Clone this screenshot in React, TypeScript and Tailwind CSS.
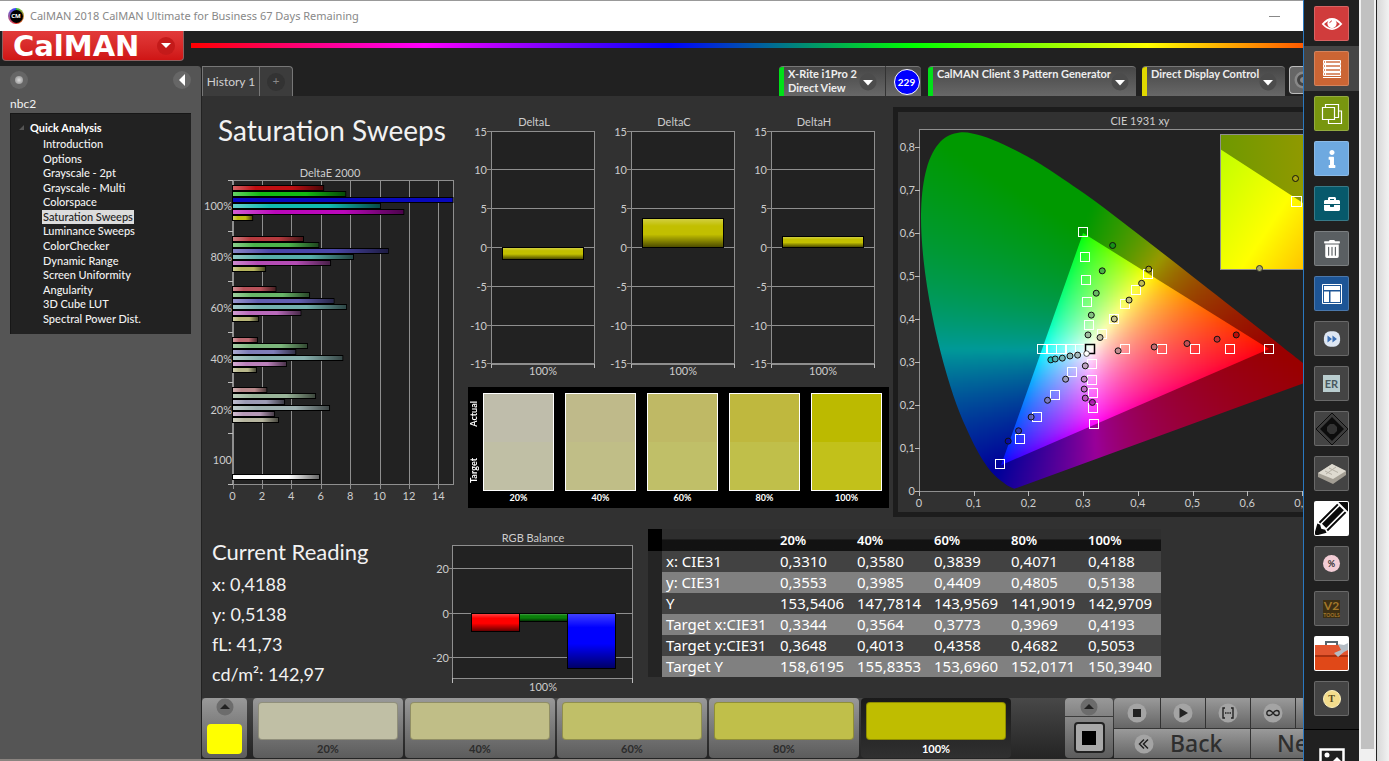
import React, { useState } from 'react';
import clsx from 'clsx';
import { FaInfo, FaBriefcase, FaTrashAlt } from 'react-icons/fa';

const PAGES = [
  'Introduction', 'Options', 'Grayscale - 2pt', 'Grayscale - Multi', 'Colorspace', 'Saturation Sweeps',
  'Luminance Sweeps', 'ColorChecker', 'Dynamic Range', 'Screen Uniformity', 'Angularity', '3D Cube LUT',
  'Spectral Power Dist.',
];

const SWATCHES = [
  { label: '20%', actual: '#bfbdab', target: '#c0bfa5' },
  { label: '40%', actual: '#bfba8a', target: '#c0be87' },
  { label: '60%', actual: '#bfb965', target: '#c0bf68' },
  { label: '80%', actual: '#bfb83e', target: '#c0bf4a' },
  { label: '100%', actual: '#bcba00', target: '#c2c11a' },
];

const STEP_FILLS = ['#c0bfa5', '#c0be87', '#c0bf68', '#c0bf4a', '#bfbd00'];

const DELTA_E = [
  { label: '100%', values: [6.2, 7.7, 15, 10.07, 11.65, 1.37], colors: ['#c00f12', '#12b812', '#0808bd', '#12b8b0', '#bb08bb', '#bdbb10'] },
  { label: '80%', values: [4.83, 5.87, 10.6, 8.23, 6.67, 2.25], colors: ['#b53a3e', '#4cb34c', '#4a46a8', '#57aeaa', '#b44cb4', '#b5b35c'] },
  { label: '60%', values: [2.95, 5.24, 6.9, 7.75, 4.65, 1.77], colors: ['#b8525a', '#68b568', '#625fb0', '#72b0ae', '#b96abb', '#b8b678'] },
  { label: '40%', values: [1.7, 5.1, 4.3, 7.5, 3.67, 1.63], colors: ['#bd6a72', '#7cb67c', '#7f7db8', '#88b1af', '#bb80bb', '#b9b88c'] },
  { label: '20%', values: [2.33, 5.65, 3.54, 6.6, 2.86, 3.13], colors: ['#b98a8c', '#98b398', '#9c9bb5', '#9db0b0', '#b79ab7', '#b7b6a0'] },
];

const HEADERS = ['20%', '40%', '60%', '80%', '100%'];
const ROWS = [
  ['x: CIE31', '0,3310', '0,3580', '0,3839', '0,4071', '0,4188'],
  ['y: CIE31', '0,3553', '0,3985', '0,4409', '0,4805', '0,5138'],
  ['Y', '153,5406', '147,7814', '143,9569', '141,9019', '142,9709'],
  ['Target x:CIE31', '0,3344', '0,3564', '0,3773', '0,3969', '0,4193'],
  ['Target y:CIE31', '0,3648', '0,4013', '0,4358', '0,4682', '0,5053'],
  ['Target Y', '158,6195', '155,8353', '153,6960', '152,0171', '150,3940'],
];

/* ---------- CIE helpers ---------- */

const LOCUS: [number, number][] = [
  [0.1741, 0.005], [0.1644, 0.0109], [0.1566, 0.0177], [0.144, 0.0297], [0.1355, 0.0399],
  [0.1241, 0.0578], [0.1096, 0.0868], [0.0913, 0.1327], [0.0687, 0.2007], [0.0454, 0.295], [0.0235, 0.4127],
  [0.0082, 0.5384], [0.0039, 0.6548], [0.0139, 0.7502], [0.0389, 0.812], [0.0743, 0.8338], [0.1142, 0.8262],
  [0.1547, 0.8059], [0.1929, 0.7816], [0.2296, 0.7543], [0.3016, 0.6923], [0.3731, 0.6245], [0.4441, 0.5547],
  [0.5125, 0.4866], [0.5752, 0.4242], [0.627, 0.3725], [0.6658, 0.334], [0.6915, 0.3083], [0.719, 0.2809],
  [0.7347, 0.2653],
];

const TARGETS: [number, number][] = [
  [0.3, 0.602], [0.303, 0.544], [0.305, 0.491], [0.307, 0.44], [0.31, 0.385],
  [0.419, 0.505], [0.396, 0.468], [0.377, 0.436], [0.356, 0.401], [0.334, 0.365],
  [0.64, 0.331], [0.568, 0.331], [0.504, 0.331], [0.444, 0.331], [0.377, 0.331],
  [0.225, 0.33], [0.243, 0.33], [0.26, 0.33], [0.277, 0.33], [0.295, 0.33],
  [0.316, 0.295], [0.317, 0.257], [0.318, 0.227], [0.318, 0.193], [0.32, 0.156],
  [0.28, 0.277], [0.248, 0.223], [0.216, 0.172], [0.184, 0.121], [0.148, 0.063],
];

const READINGS: [number, number, string][] = [
  [0.354, 0.571, '#12901a'], [0.335, 0.512, '#3fa545'], [0.324, 0.46, '#62ad62'], [0.315, 0.409, '#7cb47c'], [0.309, 0.363, '#98b398'],
  [0.42, 0.516, '#a8a410'], [0.407, 0.483, '#b5b35c'], [0.384, 0.444, '#b8b678'], [0.357, 0.4, '#b9b88c'], [0.331, 0.357, '#b7b6a0'],
  [0.58, 0.363, '#b00808'], [0.545, 0.353, '#b83038'], [0.49, 0.343, '#b85058'], [0.43, 0.335, '#bd6a72'], [0.364, 0.326, '#b98a8c'],
  [0.241, 0.305, '#12b8b0'], [0.249, 0.307, '#57aeaa'], [0.262, 0.309, '#72b0ae'], [0.276, 0.314, '#88b1af'], [0.29, 0.316, '#9db0b0'],
  [0.304, 0.291, '#b79ab7'], [0.302, 0.26, '#bb80bb'], [0.302, 0.237, '#b96abb'], [0.304, 0.216, '#b44cb4'], [0.317, 0.206, '#a010a0'],
  [0.268, 0.26, '#9c9bb5'], [0.235, 0.211, '#7f7db8'], [0.205, 0.172, '#625fb0'], [0.182, 0.14, '#3a38a8'], [0.163, 0.116, '#0808a0'],
];

const PX = 547;
const PY = 430;
const X0 = 21;
const Y0 = 379;
const cx = (x: number) => X0 + x * PX;
const cy = (y: number) => Y0 - y * PY;

// Catmull-Rom through the spectral locus, closed by the straight purple line
function locusPath() {
  const p = LOCUS.map(([x, y]) => [cx(x), cy(y)]);
  let d = `M${p[0][0]} ${p[0][1]}`;
  for (let i = 0; i < p.length - 1; i++) {
    const a = p[i - 1] ?? p[i];
    const b = p[i];
    const c = p[i + 1];
    const e = p[i + 2] ?? c;
    d += `C${b[0] + (c[0] - a[0]) / 6} ${b[1] + (c[1] - a[1]) / 6} ${c[0] - (e[0] - b[0]) / 6} ${c[1] - (e[1] - b[1]) / 6} ${c[0]} ${c[1]}`;
  }
  return d + 'Z';
}

// xy chromaticity -> brightest displayable sRGB colour, scaled by k
function xyToRgb(x: number, y: number, k: number, gamma: number) {
  const yy = Math.max(y, 0.001);
  const X = x / yy;
  const Z = (1 - x - yy) / yy;
  const lin = [
    3.2406 * X - 1.5372 - 0.4986 * Z,
    -0.9689 * X + 1.8758 + 0.0415 * Z,
    0.0557 * X - 0.204 + 1.057 * Z,
  ].map((v) => Math.max(v, 0));
  const max = Math.max(...lin, 0.0001);
  const [r, g, b] = lin.map((v) => Math.round(255 * k * Math.pow(v / max, 1 / gamma)));
  return `rgb(${r},${g},${b})`;
}

const CELL = 5;
function cells(k: number, gamma: number, x1: number, y1: number, x2: number, y2: number) {
  const out = [];
  for (let px = x1; px < x2; px += CELL) {
    for (let py = y1; py < y2; py += CELL) {
      const fill = xyToRgb((px + CELL / 2 - X0) / PX, (Y0 - py - CELL / 2) / PY, k, gamma);
      out.push(<rect key={`${px}-${py}`} x={px} y={py} width={CELL + 1} height={CELL + 1} fill={fill} />);
    }
  }
  return out;
}

/* ---------- Charts ---------- */

const label = 'fill-[#cdcdcd] text-[11px]';

function DeltaEChart() {
  const x = (v: number) => 30.5 + v * 14.7;
  return (
    <svg viewBox="0 0 262 345" className="w-[262px] h-[345px] block">
      <defs>
        <linearGradient id="barShade">
          <stop offset="0" stopColor="#fff" stopOpacity="0.35" />
          <stop offset="0.25" stopColor="#fff" stopOpacity="0" />
          <stop offset="0.65" stopColor="#000" stopOpacity="0" />
          <stop offset="1" stopColor="#000" stopOpacity="0.6" />
        </linearGradient>
      </defs>
      <text x="128" y="12" textAnchor="middle" className={label}>DeltaE 2000</text>
      <rect x="30.5" y="15.5" width="221" height="304" fill="#222" stroke="#8f8f8f" />
      {[0, 2, 4, 6, 8, 10, 12, 14].map((v) => (
        <g key={v}>
          <path d={`M${Math.round(x(v)) + 0.5} 15V324`} stroke="#8f8f8f" />
          <text x={x(v)} y="335" textAnchor="middle" className={label}>{v}</text>
        </g>
      ))}
      {[0, 1, 2, 3, 4, 5, 6].map((i) => (
        <path key={i} d={`M26 ${Math.round(15 + i * 50.6) + 0.5}h5`} stroke="#bbb" />
      ))}
      {DELTA_E.map((g, i) => (
        <g key={g.label}>
          <text x="30" y={45 + i * 51} textAnchor="end" className={label}>{g.label}</text>
          {g.values.map((v, j) => {
            const y = Math.round(20 + i * 50.6 + j * 6) + 0.5;
            return (
              <g key={j}>
                <rect x="30.5" y={y} width={v * 14.7} height="5" fill={g.colors[j]} stroke="#000" />
                {v < 15 && <rect x="31" y={y + 0.5} width={v * 14.7 - 1} height="4" fill="url(#barShade)" />}
              </g>
            );
          })}
        </g>
      ))}
      <text x="30" y="299" textAnchor="end" className={label}>100</text>
      <rect x="30.5" y="309.5" width="87" height="5" fill="#fff" stroke="#000" />
      <rect x="31" y="310" width="86" height="4" fill="url(#barShade)" />
    </svg>
  );
}

function DeltaChart({ title, value }: { title: string; value: number }) {
  const y = (v: number) => Math.round(135 - v * 7.76) + 0.5;
  const top = value > 0 ? y(value) : y(0);
  const height = Math.abs(y(value) - y(0));
  return (
    <svg viewBox="0 0 140 275" className="w-[140px] h-[275px] block">
      <text x="68" y="14" textAnchor="middle" className={label}>{title}</text>
      <rect x="25.5" y="19.5" width="103" height="233" fill="#222" stroke="#8f8f8f" />
      {[15, 10, 5, 0, -5, -10, -15].map((v) => (
        <g key={v}>
          <path d={`M21 ${y(v)}H128`} stroke="#8f8f8f" />
          <text x="21" y={y(v) + 4} textAnchor="end" className={label}>{v}</text>
        </g>
      ))}
      <path d="M25.5 252v4M128.5 252v4" stroke="#bbb" />
      <rect x="36.5" y={top} width="81" height={height} fill="#c2bf00" stroke="#000" />
      <rect x="37" y={top + 0.5} width="80" height={height - 1} fill="url(#columnShade)" />
      <text x="77" y="263" textAnchor="middle" className={label}>100%</text>
    </svg>
  );
}

function RgbBalance() {
  const bars = [
    { x: 46.5, h: 18, fill: '#ff0000' },
    { x: 94.5, h: 8, fill: '#0a800a' },
    { x: 142.5, h: 55, fill: '#0000ff' },
  ];
  return (
    <svg viewBox="0 0 223 168" className="w-[223px] h-[168px] block">
      <defs>
        <linearGradient id="columnShade" x1="0" y1="0" x2="0" y2="1">
          <stop offset="0" stopColor="#fff" stopOpacity="0.25" />
          <stop offset="0.25" stopColor="#fff" stopOpacity="0" />
          <stop offset="0.55" stopColor="#000" stopOpacity="0" />
          <stop offset="1" stopColor="#000" stopOpacity="0.6" />
        </linearGradient>
      </defs>
      <text x="108" y="13" textAnchor="middle" className={label}>RGB Balance</text>
      <rect x="27.5" y="16.5" width="180" height="133" fill="#222" stroke="#8f8f8f" />
      {[[20, 39.5], [0, 84.5], [-20, 128.5]].map(([v, y]) => (
        <g key={v}>
          <path d={`M24 ${y}H207`} stroke="#8f8f8f" />
          <text x="24" y={y + 4} textAnchor="end" className={label}>{v}</text>
        </g>
      ))}
      <path d="M27.5 149v5M207.5 149v5" stroke="#bbb" />
      {bars.map((b) => (
        <g key={b.x}>
          <rect x={b.x} y="84.5" width="48" height={b.h} fill={b.fill} stroke="#000" />
          <rect x={b.x + 0.5} y="85" width="47" height={b.h - 1} fill="url(#columnShade)" />
        </g>
      ))}
      <text x="118" y="162" textAnchor="middle" className={label}>100%</text>
    </svg>
  );
}

function CieChart() {
  const gamut = `M${cx(0.3)} ${cy(0.6)}L${cx(0.64)} ${cy(0.33)}L${cx(0.15)} ${cy(0.06)}Z`;
  return (
    <svg viewBox="0 0 440 400" className="w-[440px] h-[400px] block">
      <defs>
        <clipPath id="locus"><path d={locusPath()} /></clipPath>
        <clipPath id="gamut"><path d={gamut} /></clipPath>
        <filter id="smooth" colorInterpolationFilters="sRGB"><feGaussianBlur stdDeviation="2" /></filter>
        <linearGradient id="insetFill" x1="0" y1="0" x2="1" y2="0.6">
          <stop offset="0" stopColor="#bfff00" />
          <stop offset="0.55" stopColor="#ffff00" />
          <stop offset="1" stopColor="#ffb000" />
        </linearGradient>
        <linearGradient id="insetDark">
          <stop offset="0" stopColor="#6f9900" />
          <stop offset="0.6" stopColor="#8f9900" />
          <stop offset="1" stopColor="#998000" />
        </linearGradient>
      </defs>
      <text x="242" y="13" textAnchor="middle" className={label}>CIE 1931 xy</text>
      <rect x="21.5" y="17.5" width="430" height="362" fill="#222" stroke="#8f8f8f" />
      {[0, 1, 2, 3, 4, 5, 6, 7, 8].map((i) => (
        <g key={i}>
          <path d={`M17 ${Math.round(cy(i / 10)) + 0.5}h5`} stroke="#bbb" />
          <text x="17" y={cy(i / 10) + 4} textAnchor="end" className={label}>{i ? `0,${i}` : '0'}</text>
        </g>
      ))}
      {[0, 1, 2, 3, 4, 5, 6, 7].map((i) => (
        <g key={i}>
          <path d={`M${Math.round(cx(i / 10)) + 0.5} 379v5`} stroke="#bbb" />
          <text x={cx(i / 10)} y="395" textAnchor="middle" className={label}>{i ? `0,${i}` : '0'}</text>
        </g>
      ))}
      <g clipPath="url(#locus)"><g filter="url(#smooth)">{cells(0.6, 1.1, 10, 10, 440, 390)}</g></g>
      <g clipPath="url(#gamut)"><g filter="url(#smooth)">{cells(1, 1.4, 90, 110, 390, 365)}</g></g>

      {TARGETS.map(([x, y]) => (
        <rect key={`${x}-${y}`} x={Math.round(cx(x) - 5) + 0.5} y={Math.round(cy(y) - 5) + 0.5} width="9" height="9" fill="none" stroke="#fff" />
      ))}
      <rect x="187.5" y="232.5" width="9" height="9" fill="none" stroke="#000" strokeWidth="1.5" />
      {READINGS.map(([x, y, fill]) => (
        <circle key={`${x}-${y}`} cx={cx(x)} cy={cy(y)} r="3" fill={fill} fillOpacity="0.85" stroke="#111" />
      ))}
      <circle cx="188.6" cy="241.6" r="2.8" fill="#fff" stroke="#111" strokeWidth="0.7" />

      {/* zoomed view of the selected point */}
      <rect x="322.5" y="22.5" width="135" height="135" fill="url(#insetDark)" />
      <path d="M322 37L405 91L458 125V158H322Z" fill="url(#insetFill)" />
      <rect x="322.5" y="22.5" width="135" height="135" fill="none" stroke="#8f8f8f" />
      <circle cx="397.5" cy="66.5" r="3" fill="#a8a410" stroke="#111" />
      <circle cx="361.5" cy="156.5" r="3" fill="#a8a868" stroke="#333" />
      <rect x="393.5" y="84.5" width="10" height="10" fill="none" stroke="#fff" />
    </svg>
  );
}

/* ---------- Chrome ---------- */

function Arrow({ up }: { up?: boolean }) {
  return (
    <svg viewBox="0 0 18 18" className="w-[18px] h-[18px] shrink-0">
      <circle cx="9" cy="9" r="8.5" fill={up ? '#6c6c6c' : '#4c4c4c'} />
      {up ? <path d="M4 11L9 6L14 11Z" fill="#222" /> : <path d="M4 7H14L9 12.5Z" fill="#fff" />}
    </svg>
  );
}

function DeviceTab({ color, children, className }: { color: string; children: React.ReactNode; className: string }) {
  return (
    <button className={clsx('flex h-[30px] rounded-t border-t border-[#777] bg-linear-to-b from-[#474747] to-[#686868] text-left text-[11px] leading-[14px] font-bold text-[#eee] overflow-hidden', className)}>
      <span className={clsx('w-[5px] h-full shrink-0 mr-1', color)} />
      <span className="flex-1 whitespace-nowrap">{children}</span>
      <span className="pt-1.5 pr-2"><Arrow /></span>
    </button>
  );
}

function Sidebar() {
  const [page, setPage] = useState('Saturation Sweeps');
  return (
    <aside className="w-[202px] shrink-0 rounded-tr bg-[#555] border-r border-[#222] px-2.5 pt-1">
      <div className="flex items-center justify-between h-5">
        <button aria-label="Record" className="w-[18px] h-[18px] rounded-full bg-[#666] flex items-center justify-center">
          <span className="w-[8px] h-[8px] rounded-full bg-radial from-[#ddd] to-[#888]" />
        </button>
        <button aria-label="Collapse" className="w-[18px] h-[18px] rounded-full bg-[#666] flex items-center justify-center">
          <svg viewBox="0 0 6 12" className="w-[6px] h-3"><path d="M6 0V12L0 6Z" fill="#fff" /></svg>
        </button>
      </div>
      <div className="mt-1.5 h-[17px] leading-[16px] text-[12px] text-[#f2f2f2]">nbc2</div>
      <nav className="h-[221px] bg-[#222] border-t border-l border-[#171717] pt-[7px] text-[11px] leading-[14px]">
        <div className="flex items-center font-bold text-white">
          <svg viewBox="0 0 6 6" className="w-[6px] h-[6px] ml-2 mr-[5px]"><path d="M5 0V5H0Z" fill="#555" /></svg>
          Quick Analysis
        </div>
        <ul className="mt-0.5 h-[189px] pl-[31px] flex flex-col justify-between items-start text-[#f2f2f2] font-medium">
          {PAGES.map((p) => (
            <li key={p} className="h-[14px]">
              <button onClick={() => setPage(p)} className={clsx('block h-[14px] px-px whitespace-nowrap', p === page && 'bg-[#dcdcdc] text-[#222]')}>{p}</button>
            </li>
          ))}
        </ul>
      </nav>
    </aside>
  );
}

function SwatchPanel() {
  return (
    <div className="ml-0.5 w-[421px] h-[121px] bg-black flex pt-1.5 text-white text-[9px] font-bold">
      <div className="w-[15px] pr-1 h-[98px] flex flex-col-reverse justify-between py-2 items-center">
        <span className="[writing-mode:vertical-rl] rotate-180 leading-[10px]">Target</span>
        <span className="[writing-mode:vertical-rl] rotate-180 leading-[10px]">Actual</span>
      </div>
      <div className="flex gap-[11px]">
        {SWATCHES.map((s) => (
          <div key={s.label} className="w-[71px] text-center leading-[13px]">
            <div className="h-[98px] border border-white flex flex-col">
              <div className="flex-1" style={{ background: s.actual }} />
              <div className="flex-1" style={{ background: s.target }} />
            </div>
            {s.label}
          </div>
        ))}
      </div>
    </div>
  );
}

function ReadingsTable() {
  return (
    <table className="w-[513px] h-[148px] table-fixed border-collapse text-left text-[15px] leading-[18px] text-white font-['Noto_Sans',sans-serif]">
      <thead>
        <tr className="h-[22px] bg-linear-to-b from-[#2e2e2e] from-45% to-[#121212] to-50% text-[13px]">
          <td className="w-[14px] bg-black" />
          <td className="w-[114px]" />
          {HEADERS.map((h) => <th key={h} scope="col" className="p-0 pl-1 font-semibold">{h}</th>)}
        </tr>
      </thead>
      <tbody>
        {ROWS.map(([name, ...vals]) => (
          <tr key={name} className="h-[21px] bg-[#424242] even:bg-[#808080]">
            <td className="p-0 bg-[#242424]" />
            <th scope="row" className="p-0 pl-1 pb-0.5 font-normal whitespace-nowrap">{name}</th>
            {vals.map((v) => <td key={v} className="p-0 pl-1 pb-0.5">{v}</td>)}
          </tr>
        ))}
      </tbody>
    </table>
  );
}

function MediaIcon({ children }: { children: React.ReactNode }) {
  return (
    <svg viewBox="0 0 20 20" className="w-5 h-5">
      <circle cx="10" cy="10" r="9.5" fill="#a4a4a4" />
      {children}
    </svg>
  );
}

function Footer() {
  const [step, setStep] = useState('100%');
  const key = 'flex items-center bg-linear-to-b from-[#9a9a9a] to-[#666] border-r border-[#333]';
  return (
    <footer className="h-[61px] shrink-0 flex bg-linear-to-b from-[#484848] to-[#242424]">
      <button aria-label="Current colour" className="w-[45px] h-[60px] shrink-0 rounded bg-linear-to-b from-[#999] to-[#5c5c5c] flex flex-col items-center">
        <Arrow up />
        <span className="mt-2 w-[35px] h-[30px] rounded-sm bg-[#ffff00]" />
      </button>
      <div className="ml-1.5 flex gap-0.5">
        {HEADERS.map((h, i) => (
          <button key={h} onClick={() => setStep(h)}
            className={clsx('w-[150px] h-[60px] rounded px-[5px] pt-1 text-[11px] leading-[18px] font-bold',
              h === step ? 'bg-linear-to-b from-[#1a1a1a] to-[#303030] text-white' : 'bg-linear-to-b from-[#999] to-[#5c5c5c] text-[#2c2c2c]')}>
            <span className="block h-[38px] rounded-sm border border-black/25" style={{ background: STEP_FILLS[i] }} />
            {h}
          </button>
        ))}
      </div>
      <div className="ml-auto w-[238px] shrink-0 flex h-[60px]">
        <div className="w-[48px] mr-px shrink-0 flex flex-col">
          <button aria-label="Expand" className="h-[18px] rounded-t bg-linear-to-b from-[#999] to-[#828282] flex justify-center"><Arrow up /></button>
          <button aria-label="Pattern" className="flex-1 mt-px rounded-b bg-linear-to-b from-[#888] to-[#5c5c5c] flex items-center justify-center">
            <span className="w-[31px] h-[31px] rounded border-2 border-[#222] bg-[#a8a8a8] flex items-center justify-center">
              <span className="w-[14px] h-[14px] bg-black" />
            </span>
          </button>
        </div>
        <div className="w-[220px] shrink-0 flex flex-col">
          <div className="flex h-[30px] rounded-tl overflow-hidden">
            <button aria-label="Stop" className={clsx(key, 'justify-center w-[47px]')}><MediaIcon><path d="M6 6h8v8h-8z" fill="#222" /></MediaIcon></button>
            <button aria-label="Play" className={clsx(key, 'justify-center w-[45px]')}><MediaIcon><path d="M6.5 5L15 10L6.5 15Z" fill="#222" /></MediaIcon></button>
            <button aria-label="Range" className={clsx(key, 'justify-center w-[45px]')}>
              <MediaIcon><path d="M7 5H5V15H7M13 5H15V15H13M7 10H8.5M9.3 10H10.7M11.5 10H13" stroke="#222" strokeWidth="1.4" fill="none" /></MediaIcon>
            </button>
            <button aria-label="Continuous" className={clsx(key, 'justify-center w-[45px]')}>
              <MediaIcon><path d="M10 10C8.5 8 7.5 7.5 6.3 7.5a2.5 2.5 0 0 0 0 5C7.5 12.5 8.5 12 10 10C11.5 8 12.5 7.5 13.7 7.5a2.5 2.5 0 0 1 0 5C12.5 12.5 11.5 12 10 10Z" stroke="#222" strokeWidth="1.3" fill="none" /></MediaIcon>
            </button>
            <button aria-label="More" className={clsx(key, 'flex-1')} />
          </div>
          <div className="flex flex-1 mt-px text-[23px] leading-none font-medium text-[#2e2e2e] font-['Noto_Sans',sans-serif]">
            <button className={clsx(key, 'w-[137px] gap-4 pl-5')}>
              <MediaIcon><path d="M10 5.5L5.5 10L10 14.5M14 5.5L9.5 10L14 14.5" stroke="#222" strokeWidth="1.5" fill="none" /></MediaIcon>
              Back
            </button>
            <button className={clsx(key, 'flex-1 pl-[26px]')}>Next</button>
          </div>
        </div>
      </div>
    </footer>
  );
}

/* ---------- Dock on the right edge ---------- */

const DOCK = [
  { name: 'View', bg: 'bg-[#d03c3c]', icon: <svg viewBox="0 0 24 24" className="w-[22px] h-[22px] shrink-0"><path d="M2 12Q12 1 22 12Q12 23 2 12Z" fill="none" stroke="#fff" strokeWidth="2" /><circle cx="12" cy="11.5" r="5" fill="#fff" /><path d="M9.5 11A3 3 0 0 1 12 8.5" stroke="#d03c3c" fill="none" /></svg> },
  { name: 'List', bg: 'bg-[#cb6534]', active: true, icon: <svg viewBox="0 0 20 20" className="w-5 h-5 shrink-0"><path d="M1.5 1.5H18.5V4.5H1.5ZM1.5 5.5H18.5V8.5H1.5ZM1.5 9.5H18.5V12.5H1.5ZM1.5 13.5H18.5V16.5H1.5Z" stroke="#fff" fill="#fff" fillOpacity="0.3" /><path d="M3.5 1.5V16.5M1 18.5H19" stroke="#fff" /></svg> },
  { name: 'Copy', bg: 'bg-[#78960f]', icon: <svg viewBox="0 0 22 22" className="w-[22px] h-[22px] shrink-0" fill="none" stroke="#fff" strokeWidth="1.2"><path d="M1.5 4.5H13.5V16.5H1.5ZM4.5 4V1.5H17.5V14.5H14M7.5 17V20.5H20.5V8H18" /></svg> },
  { name: 'Info', bg: 'bg-[#6ea9e0]', icon: <FaInfo className="text-white text-lg" /> },
  { name: 'Tools', bg: 'bg-[#07596b]', icon: <FaBriefcase className="text-white text-base" /> },
  { name: 'Delete', bg: 'bg-[#5a5f62]', icon: <FaTrashAlt className="text-white text-lg" /> },
  { name: 'Layout', bg: 'bg-[#1d5596]', icon: <svg viewBox="0 0 20 20" className="w-5 h-5 shrink-0"><path d="M0.5 0.5H19.5V19.5H0.5Z" fill="none" stroke="#fff" /><path d="M2 2H18V6H2ZM2 7.5H7V18H2ZM8.5 7.5H18V18H8.5Z" fill="#fff" /></svg> },
  { name: 'Forward', bg: 'bg-[#444]', icon: <svg viewBox="0 0 20 20" className="w-[18px] h-[18px] shrink-0"><rect x="1" y="1.5" width="18" height="17" rx="7" fill="#dde6f3" /><path d="M5 6L10 10L5 14ZM10.5 6L15.5 10L10.5 14Z" fill="#3c6fb4" /></svg> },
  { name: 'ER', bg: 'bg-[#444]', icon: <span className="w-[17px] h-[17px] bg-[#b9cdcf] text-[#4a5a60] text-[11px] leading-[17px] font-bold text-center">ER</span> },
  { name: 'Diamond', bg: 'bg-[#444]', icon: <svg viewBox="0 0 34 34" className="w-[34px] h-[34px] shrink-0"><path d="M17 1L33 17L17 33L1 17Z" fill="#3c3c3c" stroke="#0c0c0c" /><path d="M17 5L29 17L17 29L5 17Z" fill="#0c0c0c" /><path d="M15 12H19L22 15V19L19 22H15L12 19V15Z" fill="#333" /></svg> },
  { name: 'Scanner', bg: 'bg-[#444]', icon: <svg viewBox="0 0 30 24" className="w-[30px] h-6 shrink-0"><path d="M1 11L15 2L29 9V13L16 22L1 15Z" fill="#a39e94" /><path d="M1 11L15 2L29 9L16 17Z" fill="#dedad0" /><path d="M8 9L15 12.5M12 6L21 10.5M19 5L9 12" stroke="#b5b0a5" /></svg> },
  { name: 'Edit', bg: 'bg-white', icon: (
    <svg viewBox="0 0 35 35" className="w-[35px] h-[35px] shrink-0">
      <g transform="rotate(45 17.5 17.5)" fill="#0a0a0a">
        <path d="M11 1V-3Q11 -6 14 -6H21Q24 -6 24 -3V1Z" />
        <path d="M11 3H13V29H11ZM14.5 3H20.5V28H14.5ZM22 3H24V29H22Z" />
        <path d="M11 31L14 30L17.5 32L21 30L24 31L19.5 39L17.5 42L15.5 39Z" />
      </g>
    </svg>
  ) },
  { name: 'Percent', bg: 'bg-[#444]', icon: <span className="w-[17px] h-[17px] rounded-full bg-[#f3cdd6] text-[#333] text-[9px] leading-[17px] font-bold text-center">%</span> },
  { name: 'V2 Tools', bg: 'bg-[#444]', icon: <span className="w-[17px] h-[18px] bg-[#3d2f14] text-[#a3782a] text-center font-bold"><span className="block text-[12px] leading-[12px]">V2</span><span className="block text-[5px] leading-[6px]">TOOLS</span></span> },
  { name: 'Toolbox', bg: 'bg-white', icon: <svg viewBox="0 0 35 35" className="w-[35px] h-[35px] shrink-0"><path d="M12 10V6H23V10" fill="none" stroke="#56656e" strokeWidth="2" /><path d="M0 9H35V20H0Z" fill="#e2552f" /><path d="M0 20H35V34H0Z" fill="#e04818" /><path d="M0 19H35V21H0Z" fill="#a83010" /><path d="M20 17L27 14L24 8L30 9L34 7V14L30 16L24 21Z" fill="#b4bcc4" /></svg> },
  { name: 'Text', bg: 'bg-[#444]', icon: <span className="w-[18px] h-[18px] rounded-full bg-[#f3dc8c] border border-[#fff2c0] text-[#5a4a20] text-[10px] leading-[16px] font-bold text-center font-['Liberation_Serif',serif]">T</span> },
];

function Dock() {
  return (
    <div className="w-[56px] shrink-0 bg-[#202020] border-l border-[#2a78c0] pt-px overflow-hidden">
      {DOCK.map((d) => (
        <div key={d.name} className={clsx('h-[45px] flex items-center pl-2.5', d.active && 'bg-[#454545]')}>
          <button aria-label={d.name} className={clsx('w-[35px] h-[35px] rounded-xs border border-white/20 flex items-center justify-center overflow-hidden', d.bg)}>{d.icon}</button>
        </div>
      ))}
      <div className="mt-2 border-t border-black pt-[18px] flex justify-center">
        <button aria-label="Gallery">
          <svg viewBox="0 0 26 20" className="w-[26px] h-5"><path d="M1.5 1.5H24.5V20H1.5Z" fill="none" stroke="#fff" strokeWidth="2.5" /><circle cx="8" cy="7" r="2.5" fill="#fff" /><path d="M3 19L9 13L12 15L18 9L24 15V20H3Z" fill="#fff" /></svg>
        </button>
      </div>
    </div>
  );
}

export default function App() {
  return (
    <div className="flex h-screen overflow-hidden bg-[#f0f0f0] font-['Lato',sans-serif]">
      <div className="flex-1 min-w-0 flex flex-col overflow-hidden bg-[#212121]">
        <header className="shrink-0">
          <div className="h-[31px] bg-white border-t border-[#999] flex items-center pl-2 pr-[23px] text-[11px] text-[#888] font-['Noto_Sans',sans-serif]">
            <span className="w-4 h-4 mr-1.5 rounded-full flex items-center justify-center bg-conic from-[#00c040] via-[#f02020] to-[#3040ff]">
              <span className="w-[13px] h-[13px] rounded-full bg-black text-white text-[6px] leading-[13px] font-bold text-center">CM</span>
            </span>
            CalMAN 2018 CalMAN Ultimate for Business 67 Days Remaining
            <button aria-label="Minimize" className="ml-auto w-[11px] h-px bg-[#888]" />
          </div>
          <div className="h-[35px] flex">
            <button className="ml-0.5 w-[182px] h-[30px] shrink-0 rounded-b border border-t-0 border-[#8d6060] bg-linear-to-b from-[#e23a3a] to-[#cf1414] flex items-center justify-between pl-2.5 pr-2 text-white">
              <span className="text-[29px] leading-[30px] font-bold font-['DejaVu_Sans',sans-serif]">CalMAN</span>
              <span className="w-[18px] h-[18px] rounded-full bg-[#c41a1a] flex items-center justify-center">
                <svg viewBox="0 0 10 5" className="w-2.5 h-[5px]"><path d="M0 0H10L5 5Z" fill="#fff" /></svg>
              </span>
            </button>
            <div className="ml-[7px] mt-3 h-[5px] flex-1 bg-[linear-gradient(to_right,#ff0000_0%,#ff00ff_21%,#0000ff_43%,#00ff00_65%,#ffff00_86%,#ff5a00_100%)]" />
          </div>
        </header>

        <div className="flex flex-1 min-h-0">
          <Sidebar />
          <div className="flex-1 min-w-0 flex flex-col overflow-hidden">
            <div className="h-[30px] shrink-0 flex justify-between">
              <div className="flex h-[30px] rounded-tr border border-b-0 border-[#777] bg-[#3c3c3c] text-[12px] text-[#d0d0d0]">
                <button className="w-[57px] border-r border-[#777] text-center whitespace-nowrap">History 1</button>
                <button aria-label="Add history" className="w-8 flex items-center justify-center">
                  <span className="w-[18px] h-[18px] rounded-full bg-[#333] text-[#888] leading-[16px] text-center">+</span>
                </button>
              </div>
              <div className="flex">
                <DeviceTab color="bg-[#00e018]" className="w-[106px] rounded-tr-none!">X-Rite i1Pro 2<br />Direct View</DeviceTab>
                <div className="w-9 mr-[7px] pl-1.5 border-l border-[#333] border-t border-t-[#777] rounded-tr bg-linear-to-b from-[#474747] to-[#686868] flex items-center justify-center">
                  <span className="w-[26px] h-[26px] rounded-full border border-white bg-[#0000ff] text-white text-[10px] leading-[24px] font-bold text-center">229</span>
                </div>
                <DeviceTab color="bg-[#00e018]" className="w-[208px] mr-1.5">CalMAN Client 3 Pattern Generator</DeviceTab>
                <DeviceTab color="bg-[#e0d800]" className="w-[143px]">Direct Display Control</DeviceTab>
                <button aria-label="Settings" className="ml-1 w-[14px] h-[28px] rounded-l border border-r-0 border-[#bbb] bg-[#666] flex items-center justify-end overflow-hidden">
                  <svg viewBox="0 0 9 18" className="w-[9px] h-[18px]"><circle cx="9" cy="9" r="8.5" fill="#888" /><circle cx="9" cy="9" r="4.5" fill="none" stroke="#444" strokeWidth="3" /></svg>
                </button>
              </div>
            </div>

            <main className="flex-1 min-h-0 bg-[#313131] overflow-hidden">
              <div className="flex h-[421px]">
                <section className="w-[264px] shrink-0">
                  <h1 className="h-[69px] pl-4 leading-[68px] text-[28px] text-[#f2f2f2] whitespace-nowrap">Saturation Sweeps</h1>
                  <DeltaEChart />
                </section>
                <section className="w-[427px] shrink-0 pt-4">
                  <div className="flex">
                    <DeltaChart title="DeltaL" value={-1.55} />
                    <DeltaChart title="DeltaC" value={3.8} />
                    <DeltaChart title="DeltaH" value={1.4} />
                  </div>
                  <SwatchPanel />
                </section>
                <section className="flex-1 min-w-0 mt-[11px] h-[410px] border-5 border-r-0 border-[#1c1c1c] overflow-hidden">
                  <CieChart />
                </section>
              </div>
              <div className="flex items-start pt-3">
                <section className="w-[223px] shrink-0 pl-2.5 pt-2 text-[#f2f2f2] text-[18px] leading-[30px]">
                  <h2 className="mb-0.5 text-[22px]">Current Reading</h2>
                  <p>x: 0,4188</p>
                  <p>y: 0,5138</p>
                  <p>fL: 41,73</p>
                  <p>cd/m²: 142,97</p>
                </section>
                <RgbBalance />
                <ReadingsTable />
              </div>
            </main>
            <Footer />
          </div>
        </div>
        <div className="h-0.5 shrink-0 bg-[#8a8480]" />
      </div>
      <Dock />
      <div className="w-[17px] shrink-0 bg-[#f0f0f0] px-0.5"><div className="h-[749px] bg-[#c1c1c1]" /></div>
      <div className="w-[13px] shrink-0 border-l border-[#222] bg-linear-to-r from-[#d8d8d8] to-[#f2f2f2]" />
    </div>
  );
}
